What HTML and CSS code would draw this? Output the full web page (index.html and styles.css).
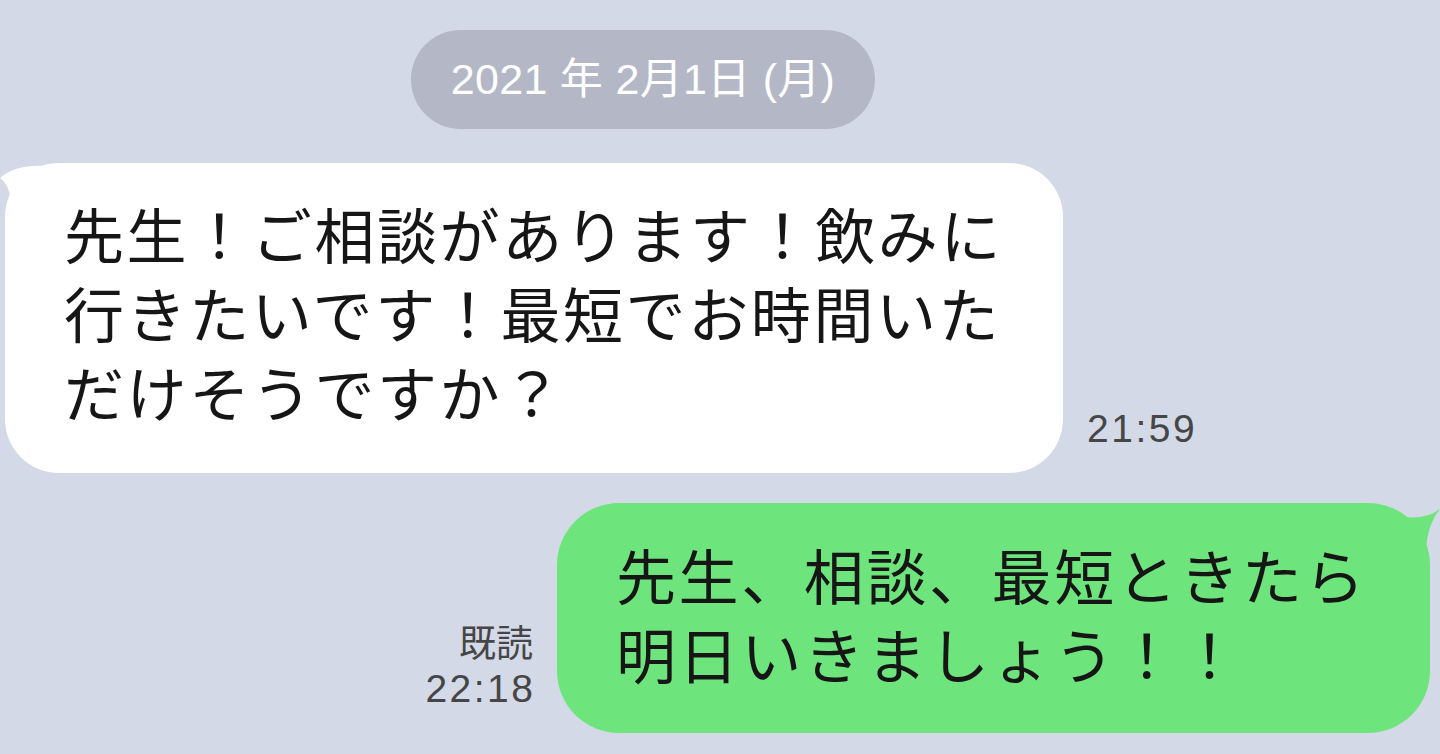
FILE: index.html
```html
<!DOCTYPE html>
<html lang="ja">
<head>
    <meta charset="UTF-8">
    <meta name="viewport" content="width=device-width, initial-scale=1.0">
    <title>トーク</title>
    <link rel="stylesheet" href="styles.css">
</head>
<body>

    <div class="date-row">
        <span class="date-pill">2021 年 2月1日 (月)</span>
    </div>

    <!-- received message -->
    <div class="msg-row msg-in">
        <div class="bubble bubble-white">
            <svg class="tail tail-left" width="50" height="50" viewBox="0 0 50 50">
                <path d="M46 3 Q16 1 0 15 Q13 25 10 48 L46 48 Z" fill="#ffffff"/>
            </svg>
            <p class="bubble-text">先生！ご相談があります！飲みに<br>行きたいです！最短でお時間いた<br>だけそうですか？</p>
        </div>
        <div class="meta">
            <span class="time">21:59</span>
        </div>
    </div>

    <!-- sent message -->
    <div class="msg-row msg-out">
        <div class="meta">
            <span class="read">既読</span>
            <span class="time">22:18</span>
        </div>
        <div class="bubble bubble-green">
            <svg class="tail tail-right" width="60" height="50" viewBox="0 0 60 50">
                <path d="M18 13 Q44 18 60 6 Q47 22 46 48 L18 48 Z" fill="#6ee57c"/>
            </svg>
            <p class="bubble-text">先生、相談、最短ときたら<br>明日いきましょう！！</p>
        </div>
    </div>

</body>
</html>
```

FILE: styles.css
```css
body {
    font-family: "Noto Sans CJK JP", "Noto Sans", sans-serif;
    margin: 0;
    padding: 0;
    background-color: #d4d9e7;
    height: 754px;
    overflow: hidden;
}

.date-row {
    padding: 30px 0 0 411px;
}
.date-pill {
    display: inline-block;
    height: 99px;
    line-height: 99px;
    width: 464px;
    text-align: center;
    border-radius: 50px;
    background-color: #b4b8c6;
    color: #ffffff;
    font-family: "Liberation Sans", "Noto Sans CJK JP", sans-serif;
    font-size: 43px;
    letter-spacing: 0.3px;
}

.msg-row {
    display: flex;
    align-items: flex-end;
    gap: 24px;
}
.msg-in {
    margin-top: 34px;
    padding-left: 5px;
}
.msg-out {
    margin-top: 30px;
    justify-content: flex-end;
    padding-right: 10px;
}

.bubble {
    position: relative;
    box-sizing: border-box;
}
.bubble-white {
    background-color: #ffffff;
    width: 1058px;
    height: 310px;
    border-radius: 54px;
    padding: 30px 0 0 59px;
}
.bubble-green {
    background-color: #6ee57c;
    width: 873px;
    height: 230px;
    border-radius: 62px;
    padding: 31px 0 0 59px;
}

.bubble-text {
    position: relative;
    margin: 0;
    font-size: 60px;
    line-height: 79px;
    letter-spacing: 2.6px;
    color: #161616;
    white-space: nowrap;
}

/* little horn at the corner of each bubble */
.tail {
    position: absolute;
    top: 0;
    overflow: visible;
}
.tail-left {
    left: -5px;
}
.tail-right {
    right: -10px;
}

.meta {
    display: flex;
    flex-direction: column;
    align-items: flex-end;
    color: #464646;
    padding-bottom: 20px;
}
.time {
    font-family: "Liberation Sans", "Noto Sans CJK JP", sans-serif;
    font-size: 39px;
    line-height: 48px;
    letter-spacing: 2.5px;
    margin-right: -2.5px;
}
.read {
    font-size: 37px;
    line-height: 48px;
}
```
